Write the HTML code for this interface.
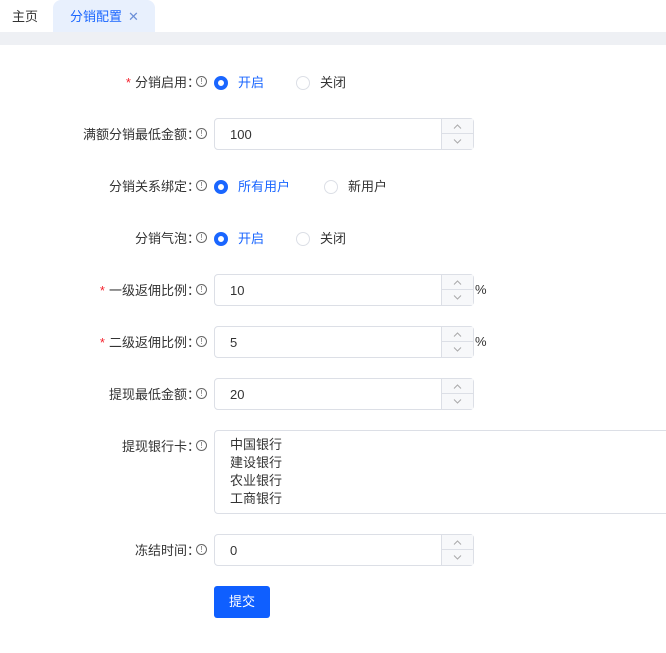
<!DOCTYPE html>
<html><head><meta charset="utf-8"><style>
*{box-sizing:border-box;margin:0;padding:0}
body{width:666px;height:653px;background:#fff;font-family:"Liberation Sans","Noto Sans CJK SC",sans-serif;font-size:13px;color:#333;position:relative;overflow:hidden}
.tabs{position:absolute;left:0;top:0;width:666px;height:32px;background:#fff}
.tab{position:absolute;top:0;height:32px;line-height:34px;font-size:13px}
.t1{left:12px;color:#333}
.t2{left:53px;width:102px;background:#e8f0fd;border-radius:8px 8px 0 0;color:#1a66ff;padding-left:17px}
.t2 span{margin-left:6px;color:#6b8fd8}
.strip{position:absolute;left:0;top:32px;width:666px;height:13px;background:#eef0f4}
.row{position:absolute;left:0;width:666px}
.lab{position:absolute;right:466px;white-space:nowrap;font-size:13px;color:#333}
.req{color:#f5222d;margin-right:4px}
.ic{position:absolute;left:196px;width:11px;height:11px;border:1px solid #666;border-radius:50%;font-size:8px;line-height:9px;text-align:center;color:#666}
.inp{position:absolute;left:214px;width:260px;height:32px;border:1px solid #dcdfe6;border-radius:4px;padding-left:15px;line-height:31px;font-size:13px}
.sp{position:absolute;right:0;top:0;width:32px;height:30px;border-left:1px solid #dcdfe6;background:#f7f8fa}
.sp div{height:15px;display:flex;align-items:center;justify-content:center}
.sp div:first-child{border-bottom:1px solid #dcdfe6}
.pct{position:absolute;left:475px;font-size:13px}
.rad{position:absolute;width:14px;height:14px;border-radius:50%;border:1px solid #dcdfe6}
.rad.on{border:4px solid #1a66ff;background:#fff}
.rt{position:absolute;font-size:13px}
.blue{color:#1a66ff}
</style></head><body>
<div class="tabs"><div class="tab t1">主页</div><div class="tab t2">分销配置<span>✕</span></div></div>
<div class="strip"></div>

<div class="row" style="top:74px">
<div class="lab" style="top:-2px"><span class="req">*</span>分销启用：</div><div class="ic" style="top:2px">!</div>
<div class="rad on" style="left:214px;top:2px"></div><div class="rt blue" style="left:238px;top:-2px">开启</div>
<div class="rad" style="left:296px;top:2px"></div><div class="rt" style="left:320px;top:-2px">关闭</div></div>

<div class="row" style="top:118px">
<div class="lab" style="top:6px">满额分销最低金额：</div><div class="ic" style="top:10px">!</div>
<div class="inp" style="top:0">100<div class="sp"><div><svg width="9" height="5"><path d="M1 4.5L4.5 1L8 4.5" fill="none" stroke="#aaa"/></svg></div><div><svg width="9" height="5"><path d="M1 .5L4.5 4L8 .5" fill="none" stroke="#aaa"/></svg></div></div></div></div>

<div class="row" style="top:178px">
<div class="lab" style="top:-2px">分销关系绑定：</div><div class="ic" style="top:2px">!</div>
<div class="rad on" style="left:214px;top:2px"></div><div class="rt blue" style="left:238px;top:-2px">所有用户</div>
<div class="rad" style="left:324px;top:2px"></div><div class="rt" style="left:348px;top:-2px">新用户</div></div>

<div class="row" style="top:230px">
<div class="lab" style="top:-2px">分销气泡：</div><div class="ic" style="top:2px">!</div>
<div class="rad on" style="left:214px;top:2px"></div><div class="rt blue" style="left:238px;top:-2px">开启</div>
<div class="rad" style="left:296px;top:2px"></div><div class="rt" style="left:320px;top:-2px">关闭</div></div>

<div class="row" style="top:274px">
<div class="lab" style="top:6px"><span class="req">*</span>一级返佣比例：</div><div class="ic" style="top:10px">!</div>
<div class="inp" style="top:0">10<div class="sp"><div><svg width="9" height="5"><path d="M1 4.5L4.5 1L8 4.5" fill="none" stroke="#aaa"/></svg></div><div><svg width="9" height="5"><path d="M1 .5L4.5 4L8 .5" fill="none" stroke="#aaa"/></svg></div></div></div><div class="pct" style="top:8px">%</div></div>

<div class="row" style="top:326px">
<div class="lab" style="top:6px"><span class="req">*</span>二级返佣比例：</div><div class="ic" style="top:10px">!</div>
<div class="inp" style="top:0">5<div class="sp"><div><svg width="9" height="5"><path d="M1 4.5L4.5 1L8 4.5" fill="none" stroke="#aaa"/></svg></div><div><svg width="9" height="5"><path d="M1 .5L4.5 4L8 .5" fill="none" stroke="#aaa"/></svg></div></div></div><div class="pct" style="top:8px">%</div></div>

<div class="row" style="top:378px">
<div class="lab" style="top:6px">提现最低金额：</div><div class="ic" style="top:10px">!</div>
<div class="inp" style="top:0">20<div class="sp"><div><svg width="9" height="5"><path d="M1 4.5L4.5 1L8 4.5" fill="none" stroke="#aaa"/></svg></div><div><svg width="9" height="5"><path d="M1 .5L4.5 4L8 .5" fill="none" stroke="#aaa"/></svg></div></div></div></div>

<div class="row" style="top:430px">
<div class="lab" style="top:6px">提现银行卡：</div><div class="ic" style="top:10px">!</div>
<div style="position:absolute;left:214px;top:0;width:460px;height:84px;border:1px solid #dcdfe6;border-radius:4px;padding:5px 15px;line-height:18px">中国银行<br>建设银行<br>农业银行<br>工商银行</div></div>

<div class="row" style="top:534px">
<div class="lab" style="top:6px">冻结时间：</div><div class="ic" style="top:10px">!</div>
<div class="inp" style="top:0">0<div class="sp"><div><svg width="9" height="5"><path d="M1 4.5L4.5 1L8 4.5" fill="none" stroke="#aaa"/></svg></div><div><svg width="9" height="5"><path d="M1 .5L4.5 4L8 .5" fill="none" stroke="#aaa"/></svg></div></div></div></div>

<div style="position:absolute;left:214px;top:586px;width:56px;height:32px;background:#0f5fff;border-radius:3px;color:#fff;text-align:center;line-height:32px">提交</div>
</body></html>
